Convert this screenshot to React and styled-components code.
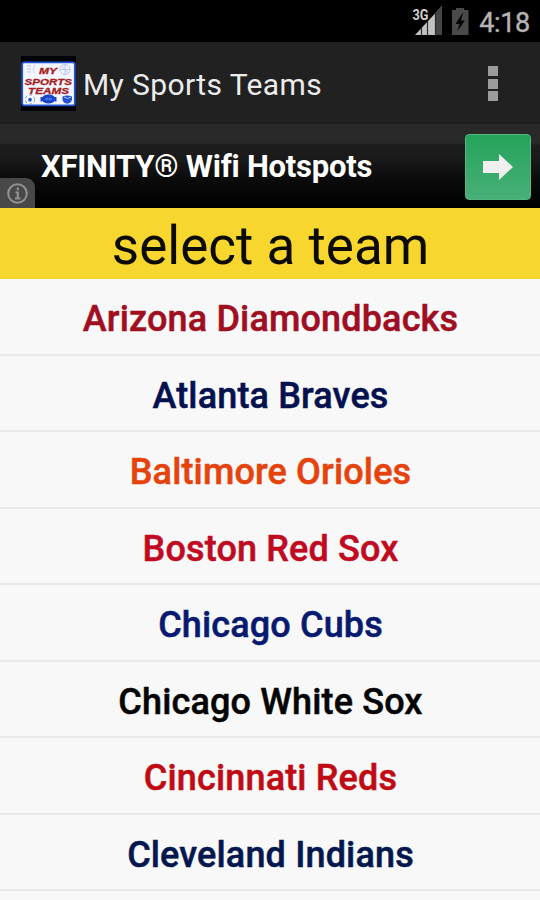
import React from 'react';
import styled, { createGlobalStyle } from 'styled-components';

const GlobalStyle = createGlobalStyle`
  body {
    margin: 0;
    background-color: #f8f8f8;
    font-family: Roboto, "Liberation Sans", sans-serif;
    overflow: hidden;
  }
`;

const Screen = styled.div`
  display: flex;
  flex-direction: column;
  width: 540px;
  height: 900px;
  overflow: hidden;
  white-space: nowrap;
`;

const StatusBar = styled.div`
  display: flex;
  justify-content: flex-end;
  align-items: center;
  flex: none;
  height: 42px;
  padding-right: 10px;
  box-sizing: border-box;
  background-color: #000;
`;

const StatusIcons = styled.svg`
  flex: none;
  margin-right: 10px;
`;

const Clock = styled.span`
  color: #b4b4b4;
  font-size: 27px;
  line-height: 42px;
  letter-spacing: -0.3px;
  padding-top: 4px;
  -webkit-text-stroke: 0.4px #b4b4b4;
`;

const ActionBar = styled.div`
  display: flex;
  align-items: center;
  flex: none;
  height: 82px;
  padding: 0 42px 0 21px;
  box-sizing: border-box;
  background-color: #212121;
  border-bottom: 2px solid #1b1b1b;
`;

const Logo = styled.svg`
  flex: none;
  margin-top: 2px;
`;

const AppTitle = styled.h1`
  flex: 1;
  margin: 0 0 0 7px;
  color: #ececec;
  font-size: 30px;
  font-weight: 400;
  line-height: 36px;
  letter-spacing: 0.4px;
  padding-top: 5px;
`;

const MenuButton = styled.div`
  display: grid;
  gap: 2.5px;
  padding-top: 3px;
`;

const MenuDot = styled.span`
  width: 10px;
  height: 10px;
  background-color: #9c9c9c;
`;

const AdBanner = styled.div`
  position: relative;
  display: flex;
  justify-content: space-between;
  align-items: center;
  flex: none;
  height: 84px;
  padding: 0 9px 0 41px;
  box-sizing: border-box;
  background: linear-gradient(#292929 0, #292929 19px, #1d1d1d 21px, #1a1a1a 34px, #131313 44px, #0c0c0c 54px, #050505 70px, #000 84px);
`;

const AdText = styled.span`
  color: #fff;
  font-size: 31px;
  font-weight: 700;
  letter-spacing: -0.24px;
`;

const AdButton = styled.div`
  display: flex;
  justify-content: center;
  align-items: center;
  width: 66px;
  height: 66px;
  box-sizing: border-box;
  border: 1.5px solid #52b87d;
  border-radius: 4px;
  background: linear-gradient(#25a35a, #48b078);
  margin-top: 1px;
`;

const AdInfo = styled.div`
  position: absolute;
  left: 0;
  bottom: 0;
  width: 35px;
  height: 30px;
  border-top-right-radius: 9px;
  background-color: #484848;
`;

const Header = styled.h2`
  flex: none;
  height: 71px;
  margin: 0;
  padding-left: 1px;
  background-color: #f7d62e;
  color: #0c0b02;
  font-size: 53px;
  font-weight: 400;
  line-height: 77px;
  text-align: center;
`;

const TeamList = styled.ul`
  margin: 0;
  padding: 0;
  list-style: none;
`;

const TeamItem = styled.li`
  height: 76.5px;
  padding-left: 1px;
  box-sizing: border-box;
  border-bottom: 2px solid #e9e9e9;
  background-color: #f8f8f8;
  color: ${({ $color }) => $color};
  font-size: 36px;
  font-weight: 500;
  line-height: 81px;
  letter-spacing: 0.15px;
  text-align: center;
  -webkit-text-stroke: 0.5px ${({ $color }) => $color};
`;

const teams = [
  { name: 'Arizona Diamondbacks', color: '#a00e22' },
  { name: 'Atlanta Braves', color: '#03114f' },
  { name: 'Baltimore Orioles', color: '#e5420c' },
  { name: 'Boston Red Sox', color: '#bf0a22' },
  { name: 'Chicago Cubs', color: '#071a70' },
  { name: 'Chicago White Sox', color: '#050505' },
  { name: 'Cincinnati Reds', color: '#c00a14' },
  { name: 'Cleveland Indians', color: '#03174f' },
];

const SignalAndBattery = () => (
  <StatusIcons width="58" height="30" viewBox="0 0 58 30">
    <path d="M4 29 L31 0 V29 Z" fill="#c2c2c2" />
    <path d="M24 7.5 L31 0 V29 H24 Z" fill="#454545" />
    <path d="M10.5 22V29M16.5 15V29M24.5 7V29" stroke="#2c2c2c" strokeWidth="1.2" />
    <text x="1.5" y="13.5" fill="#d2d2d2" stroke="#000" strokeWidth="2" paintOrder="stroke" fontSize="15.5" fontWeight="700" textLength="16" lengthAdjust="spacingAndGlyphs">3G</text>
    <path d="M41 4h4V2h8v2h4.5v25H41z" fill="#4a4a4a" />
    <path d="M51.5 7 44.5 18h4l-2 7 7.5-10.5h-4l2-7.5z" fill="#050505" />
  </StatusIcons>
);

const AppLogo = () => (
  <Logo width="55" height="55" viewBox="0 0 55 55">
    <rect width="55" height="55" fill="#030303" />
    <rect x="1.2" y="6.4" width="52.6" height="43" rx="2" fill="#f4f6fb" stroke="#2456dc" strokeWidth="1.8" />
    <g fill="#a51c24" stroke="#a51c24" strokeWidth="0.3" fontFamily="Liberation Sans" fontWeight="700" fontStyle="italic" fontSize="9.6">
      <text x="18" y="18.4" fontSize="9" textLength="18" lengthAdjust="spacingAndGlyphs">MY</text>
      <text x="3.5" y="28.5" textLength="47.5" lengthAdjust="spacingAndGlyphs">SPORTS</text>
      <text x="7" y="37.9" textLength="41" lengthAdjust="spacingAndGlyphs">TEAMS</text>
    </g>
    <g fill="none" stroke="#b9c6ee" strokeWidth="1">
      <path d="M7 9v9M9 9v9M14 9q-3 4 0 9" strokeDasharray="2 1" />
      <circle cx="44" cy="13.5" r="5" />
      <path d="M39 13.5h10M44 8.5v10M40.5 10l7 7" />
    </g>
    <circle cx="9" cy="43.5" r="4.6" fill="#fff" stroke="#8299e3" strokeDasharray="3 2" />
    <path d="m9 41.5 2 1.6-.8 2.4H7.8L7 43.1z" fill="#2451cf" />
    <ellipse cx="27.5" cy="43" rx="6.8" ry="4.6" fill="#1646cc" />
    <path d="M20.5 41v4.5M34.5 41v4.5" stroke="#1646cc" strokeWidth="2" />
    <path d="M24 43h7M26 41.5v3M29 41.5v3" stroke="#6c8ced" strokeWidth="0.8" />
    <path d="M41.5 40.5q5-2 9.5 0v3q-1 4-4.7 4.2Q42 47.5 41.5 43.5z" fill="#2453d4" />
    <path d="M43 41q3.5 3 7 0" fill="none" stroke="#b3c5fa" />
  </Logo>
);

export default function App() {
  return (
    <>
      <GlobalStyle />
      <Screen>
        <StatusBar>
          <SignalAndBattery />
          <Clock>4:18</Clock>
        </StatusBar>
        <ActionBar>
          <AppLogo />
          <AppTitle>My Sports Teams</AppTitle>
          <MenuButton>
            <MenuDot />
            <MenuDot />
            <MenuDot />
          </MenuButton>
        </ActionBar>
        <AdBanner>
          <AdText>XFINITY® Wifi Hotspots</AdText>
          <AdButton>
            <svg width="32" height="28" viewBox="0 0 32 28">
              <path d="M1 8h16V1l14 13-14 13v-7H1z" fill="#efefef" />
            </svg>
          </AdButton>
          <AdInfo>
            <svg width="35" height="30" viewBox="0 0 35 30">
              <circle cx="17.5" cy="15.5" r="9.3" fill="none" stroke="#919191" strokeWidth="2" />
              <path d="M17.8 9.5v2.8M15.5 14.5h2.3v5.5M15 20.5h5.5" fill="none" stroke="#919191" strokeWidth="2.2" />
            </svg>
          </AdInfo>
        </AdBanner>
        <Header>select a team</Header>
        <TeamList>
          {teams.map((team) => (
            <TeamItem key={team.name} $color={team.color}>
              {team.name}
            </TeamItem>
          ))}
        </TeamList>
      </Screen>
    </>
  );
}
